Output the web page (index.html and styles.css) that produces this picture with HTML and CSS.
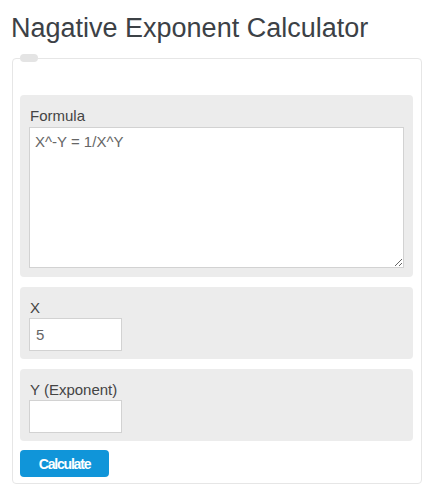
FILE: index.html
```html
<!DOCTYPE html>
<html lang="en">
<head>
    <meta charset="UTF-8">
    <meta name="viewport" content="width=device-width, initial-scale=1.0">
    <title>Nagative Exponent Calculator</title>
    <link rel="stylesheet" href="styles.css">
</head>
<body>
    <h1 class="title">Nagative Exponent Calculator</h1>
    <form class="calculator">
        <fieldset class="calc-box">
            <legend class="calc-tab"></legend>
            <div class="field">
                <label for="formula">Formula</label>
                <textarea id="formula" class="formula">X^-Y = 1/X^Y</textarea>
            </div>
            <div class="field">
                <label for="x-value">X</label>
                <input type="text" id="x-value" value="5">
            </div>
            <div class="field">
                <label for="y-value">Y (Exponent)</label>
                <input type="text" id="y-value">
            </div>
            <button type="button" class="calc-button">Calculate</button>
        </fieldset>
    </form>
</body>
</html>
```

FILE: styles.css
```css
body {
    margin: 0;
    background: #fff;
    font-family: 'Liberation Sans', Arial, Helvetica, sans-serif;
}
.title {
    margin: 12px 0 10px 11px;
    font-size: 27px;
    line-height: 32px;
    font-weight: normal;
    color: #3c4146;
}
.calculator {
    margin: 0 11px 0 12px;
}
.calc-box {
    margin: 0;
    padding: 33px 8px 6px 7px;
    border: 1px solid #e6e6e6;
    border-radius: 4px;
    min-width: 0;
}
.calc-tab {
    margin: 0;
    padding: 0;
    width: 18px;
    height: 8px;
    border-radius: 4px;
    background: #e4e4e4;
}
.field {
    background: #ececec;
    border-radius: 4px;
    padding: 12px 9px 8px 9px;
    margin-bottom: 10px;
    display: flex;
    flex-direction: column;
    align-items: flex-start;
}
.field label {
    font-size: 15px;
    line-height: 17px;
    color: #444;
    margin-left: 1px;
    margin-bottom: 2px;
}
.field textarea,
.field input {
    box-sizing: border-box;
    font-family: 'Liberation Sans', Arial, Helvetica, sans-serif;
    font-size: 15px;
    color: #666;
    border: 1px solid #d2d2d2;
    background: #fff;
    border-radius: 0;
    outline: none;
}
.formula {
    width: 100%;
    height: 141px;
    padding: 5px;
    line-height: 17px;
    margin-top: 1px;
}
.field:first-of-type {
    padding-bottom: 9px;
}
.field input {
    width: 93px;
    height: 33px;
    padding: 0 6px;
}
.calc-button {
    display: block;
    width: 89px;
    height: 27px;
    margin-top: -1px;
    padding: 0;
    border: none;
    border-radius: 4px;
    background: #1095d9;
    color: #fff;
    font-family: 'Liberation Sans', Arial, Helvetica, sans-serif;
    font-size: 14px;
    font-weight: bold;
    letter-spacing: -1.2px;
    cursor: pointer;
}
```
